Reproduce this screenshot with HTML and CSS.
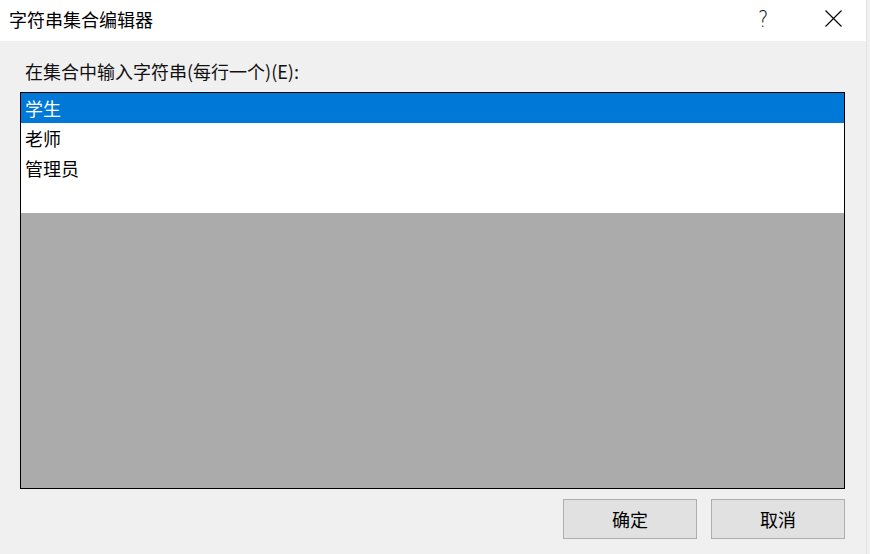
FILE: index.html
```html
<!DOCTYPE html>
<html lang="zh-CN">
<head>
<meta charset="utf-8">
<title>字符串集合编辑器</title>
<link rel="stylesheet" href="styles.css">
</head>
<body>
<div class="window">
  <div class="titlebar">
    <div class="title">字符串集合编辑器</div>
    <div class="caption-buttons">
      <span class="help">?</span>
      <svg class="close" width="17" height="17" viewBox="0 0 17 17"><path d="M0.5 0.5 L16.5 16.5 M16.5 0.5 L0.5 16.5" stroke="#000" stroke-width="1.1" fill="none"/></svg>
    </div>
  </div>
  <div class="content">
    <div class="label">在集合中输入字符串(每行一个)(E):</div>
    <div class="listbox">
      <div class="rows">
        <div class="row selected">学生</div>
        <div class="row">老师</div>
        <div class="row">管理员</div>
        <div class="row"></div>
      </div>
      <div class="empty"></div>
    </div>
    <div class="buttons">
      <button class="btn">确定</button>
      <button class="btn">取消</button>
    </div>
  </div>
</div>
</body>
</html>
```

FILE: styles.css
```css
html, body {
  margin: 0;
  padding: 0;
}
body {
  width: 870px;
  height: 554px;
  overflow: hidden;
  background: #f0f0f0;
  font-family: "Noto Sans CJK SC", "Microsoft YaHei", sans-serif;
  font-size: 18px;
  color: #000;
}
.window {
  height: 554px;
  display: flex;
  flex-direction: column;
  border-right: 1px solid #e2e2e2;
  box-sizing: border-box;
  width: 867px;
}
.titlebar {
  height: 41px;
  background: #fff;
  display: flex;
  align-items: center;
  justify-content: space-between;
  padding-left: 9px;
}
.title {
  line-height: 24px;
  margin-top: -4px;
}
.caption-buttons {
  display: flex;
  align-items: center;
  margin-top: -4px;
}
.help {
  font-family: "DejaVu Sans", sans-serif;
  font-weight: 200;
  font-size: 23px;
  color: #111;
  margin-right: 56px;
  line-height: 24px;
  transform: scaleX(0.85);
}
.close {
  display: block;
  margin-right: 24px;
}
.content {
  flex: 1;
  padding: 18px 21px 0 20px;
  display: flex;
  flex-direction: column;
}
.label {
  line-height: 24px;
  padding-left: 5px;
  margin-bottom: 9px;
  color: #111;
}
.listbox {
  height: 397px;
  box-sizing: border-box;
  border: 1px solid #000;
  display: flex;
  flex-direction: column;
}
.rows {
  background: #fff;
}
.row {
  height: 30px;
  line-height: 30px;
  padding-left: 4px;
}
.row.selected {
  background: #0078d7;
  color: #fff;
}
.empty {
  flex: 1;
  background: #ababab;
}
.buttons {
  display: flex;
  justify-content: flex-end;
  gap: 14px;
  margin-top: 10px;
}
.btn {
  width: 134px;
  height: 40px;
  background: #e1e1e1;
  border: 1px solid #adadad;
  font-family: inherit;
  font-size: 18px;
  color: #000;
  padding: 0;
  margin: 0;
}
```
